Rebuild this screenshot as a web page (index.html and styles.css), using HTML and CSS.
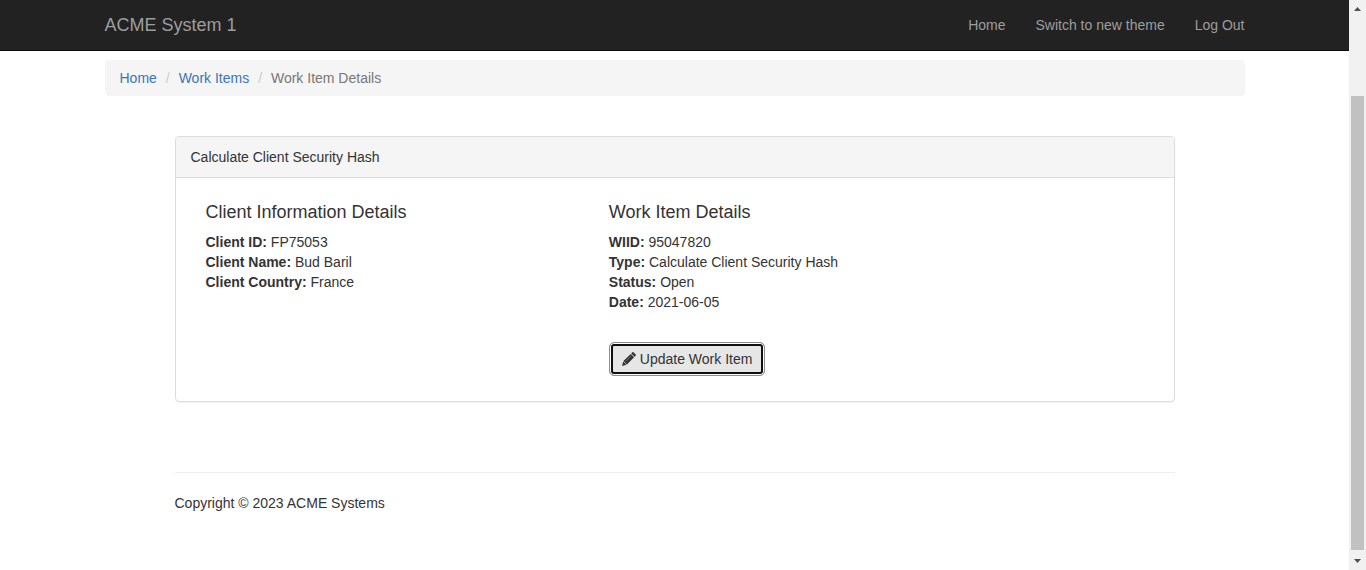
FILE: index.html
```html
<!DOCTYPE html>
<html lang="en">
<head>
<meta charset="utf-8">
<title>ACME System 1 - Work Item Details</title>
<link rel="stylesheet" href="styles.css">
</head>
<body>
<div class="viewport">
  <div class="page">
    <header class="navbar">
      <div class="container navbar-inner">
        <a class="brand" href="#">ACME System 1</a>
        <nav class="nav">
          <a href="#">Home</a>
          <a href="#">Switch to new theme</a>
          <a href="#">Log Out</a>
        </nav>
      </div>
    </header>
    <div class="container">
      <ol class="breadcrumb">
        <li><a href="#">Home</a></li>
        <li><a href="#">Work Items</a></li>
        <li class="active">Work Item Details</li>
      </ol>
      <main class="content">
        <section class="panel">
          <div class="panel-heading">Calculate Client Security Hash</div>
          <div class="panel-body">
            <div class="client">
              <h4>Client Information Details</h4>
              <p><b>Client ID:</b> FP75053<br><b>Client Name:</b> Bud Baril<br><b>Client Country:</b> France</p>
            </div>
            <div class="work-item">
              <h4>Work Item Details</h4>
              <p><b>WIID:</b> 95047820<br><b>Type:</b> Calculate Client Security Hash<br><b>Status:</b> Open<br><b>Date:</b> 2021-06-05</p>
              <button class="btn" type="button"><svg class="pencil" viewBox="0 0 14 14" aria-hidden="true"><path d="M10.1.5Q10.900-.3 11.700.5L13.500 2.300Q14.300 3.100 13.500 3.900L12.600 4.800 9.200 1.400ZM8.700 1.900 12.100 5.300 4.900 12.500 1.500 9.100ZM1.200 9.500 4.500 12.800 0 14Z"/><path class="shine" d="M3.800 9.300 9 4.100"/></svg>Update Work Item</button>
            </div>
          </div>
        </section>
        <footer class="footer">Copyright © 2023 ACME Systems</footer>
      </main>
    </div>
  </div>
  <div class="scrollbar">
    <svg class="arrow" viewBox="0 0 17 17"><path d="M5 11 8.500 7 12 11Z"/></svg>
    <div class="track"><div class="thumb"></div></div>
    <svg class="arrow" viewBox="0 0 17 17"><path d="M5 6 8.500 10 12 6Z"/></svg>
  </div>
</div>
</body>
</html>
```

FILE: styles.css
```css
* { box-sizing: border-box; }
body {
  margin: 0;
  overflow: hidden;
  background: #fff;
  color: #333;
  font: 14px/20px "Liberation Sans", Arial, sans-serif;
}
a { color: #3b76b3; text-decoration: none; }
.viewport { display: flex; height: 570px; }
.page { flex: 1; }
.container { width: 1140px; margin: 0 auto; }
.navbar { height: 51px; background: #222; border-bottom: 1px solid #080808; }
.navbar-inner { display: flex; justify-content: space-between; align-items: center; height: 50px; }
.brand { color: #9d9d9d; font-size: 18px; }
.nav { display: flex; gap: 30px; }
.nav a { color: #9d9d9d; }
.breadcrumb {
  display: flex;
  margin: 9px 0 40px;
  padding: 8px 15px;
  list-style: none;
  background: #f5f5f5;
  border-radius: 4px;
}
.breadcrumb li + li::before { content: "/\00a0"; padding: 0 5px; color: #ccc; }
.breadcrumb li + li { padding-left: 4px; }
.breadcrumb .active { color: #777; }
.content { width: 1000px; margin: 0 auto; }
.panel {
  height: 266px;
  border: 1px solid #ddd;
  border-radius: 4px;
  box-shadow: 0 1px 1px rgba(0, 0, 0, .05);
}
.panel-heading {
  padding: 10px 15px;
  background: #f5f5f5;
  border-bottom: 1px solid #ddd;
  border-radius: 3px 3px 0 0;
}
.panel-body { display: grid; grid-template-columns: 403.3px 1fr; padding: 24px 30px; }
h4 { margin: 0 0 10px; font-size: 18px; line-height: 20px; font-weight: 500; }
p { margin: 0 0 30px; }
.btn {
  display: flex;
  align-items: center;
  gap: 4px;
  width: 156px;
  height: 34px;
  padding: 0 0 0 12px;
  color: #333;
  background: #e6e6e6;
  border: 1px solid #8c8c8c;
  border-radius: 5px;
  box-shadow: inset 0 0 0 1px #fff, inset 0 0 0 3px #101010;
  font: inherit;
  white-space: nowrap;
}
.pencil { width: 14px; height: 14px; fill: #333; }
.shine { fill: none; stroke: #999; stroke-width: .6; }
.footer { margin-top: 70px; padding-top: 20px; border-top: 1px solid #eee; }
.scrollbar { display: flex; flex-direction: column; width: 17px; background: #f1f1f1; }
.arrow { width: 17px; height: 17px; fill: #505050; }
.track { flex: 1; padding: 79px 2px 3px; }
.thumb { height: 100%; background: #c1c1c1; }
```
